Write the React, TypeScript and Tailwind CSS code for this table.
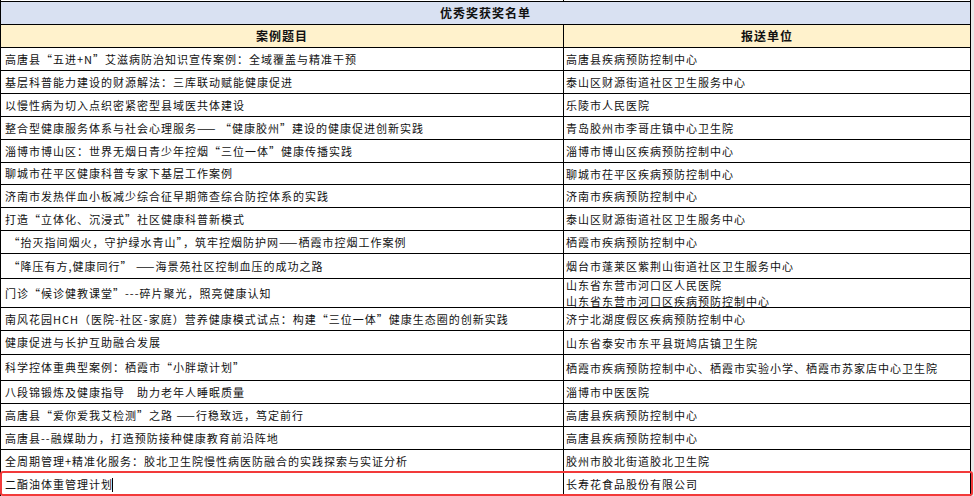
const rows: { title: string; unit: string[]; h: string }[] = [
  { title: "高唐县“五进+N”艾滋病防治知识宣传案例：全域覆盖与精准干预", unit: ["高唐县疾病预防控制中心"], h: "h-[23px]" },
  { title: "基层科普能力建设的财源解法：三库联动赋能健康促进", unit: ["泰山区财源街道社区卫生服务中心"], h: "h-[23px]" },
  { title: "以慢性病为切入点织密紧密型县域医共体建设", unit: ["乐陵市人民医院"], h: "h-[23px]" },
  { title: "整合型健康服务体系与社会心理服务—— “健康胶州”建设的健康促进创新实践", unit: ["青岛胶州市李哥庄镇中心卫生院"], h: "h-[23px]" },
  { title: "淄博市博山区：世界无烟日青少年控烟“三位一体”健康传播实践", unit: ["淄博市博山区疾病预防控制中心"], h: "h-[23px]" },
  { title: "聊城市茌平区健康科普专家下基层工作案例", unit: ["聊城市茌平区疾病预防控制中心"], h: "h-[22px]" },
  { title: "济南市发热伴血小板减少综合征早期筛查综合防控体系的实践", unit: ["济南市疾病预防控制中心"], h: "h-[23px]" },
  { title: "打造“立体化、沉浸式”社区健康科普新模式", unit: ["泰山区财源街道社区卫生服务中心"], h: "h-[23px]" },
  { title: " “抬灭指间烟火，守护绿水青山”，筑牢控烟防护网——栖霞市控烟工作案例", unit: ["栖霞市疾病预防控制中心"], h: "h-[23px]" },
  { title: " “降压有方,健康同行” ——海景苑社区控制血压的成功之路", unit: ["烟台市蓬莱区紫荆山街道社区卫生服务中心"], h: "h-[25px]" },
  { title: "门诊“候诊健教课堂”---碎片聚光，照亮健康认知", unit: ["山东省东营市河口区人民医院", "山东省东营市河口区疾病预防控制中心"], h: "h-[29px]" },
  { title: "南风花园HCH（医院-社区-家庭）营养健康模式试点：构建“三位一体”健康生态圈的创新实践", unit: ["济宁北湖度假区疾病预防控制中心"], h: "h-[23px]" },
  { title: "健康促进与长护互助融合发展", unit: ["山东省泰安市东平县斑鸠店镇卫生院"], h: "h-[24px]" },
  { title: "科学控体重典型案例：栖霞市“小胖墩计划”", unit: ["栖霞市疾病预防控制中心、栖霞市实验小学、栖霞市苏家店中心卫生院"], h: "h-[26px]" },
  { title: "八段锦锻炼及健康指导　助力老年人睡眠质量", unit: ["淄博市中医医院"], h: "h-[23px]" },
  { title: "高唐县“爱你爱我艾检测”之路 ——行稳致远，笃定前行", unit: ["高唐县疾病预防控制中心"], h: "h-[23px]" },
  { title: "高唐县--融媒助力，打造预防接种健康教育前沿阵地", unit: ["高唐县疾病预防控制中心"], h: "h-[23px]" },
  { title: "全周期管理+精准化服务：胶北卫生院慢性病医防融合的实践探索与实证分析", unit: ["胶州市胶北街道胶北卫生院"], h: "h-[23px]" },
];

const font = "font-['Noto_Sans_CJK_SC',sans-serif] text-[11px] tracking-[1px] text-[#111]";

export default function App() {
  return (
    <div className={`flex min-h-screen bg-[#e9e9e9] ${font}`}>
      <div className="w-[971px] bg-white border-l border-black">
        {/* leftover of the row above */}
        <div className="flex h-px">
          <div className="w-[563px] border-r border-black" />
          <div className="flex-1 border-r border-black" />
        </div>

        <div className="flex h-[24px] items-center justify-center border-y border-r border-black bg-[#d9e1f2] text-[12px] font-semibold">
          优秀奖获奖名单
        </div>

        <div className="flex h-[23px] border-b border-black bg-[#fff2cc] text-[12px] font-semibold">
          <div className="flex w-[563px] items-center justify-center border-r border-black">案例题目</div>
          <div className="flex flex-1 items-center justify-center border-r border-black">报送单位</div>
        </div>

        {rows.map((r, i) => (
          <div key={i} className={`flex ${r.h} border-b border-black`}>
            <div className="flex w-[563px] items-center whitespace-pre border-r border-black pl-[4px]">
              {r.title}
            </div>
            <div className="flex flex-1 flex-col justify-center border-r border-black pl-[2px] leading-[16px]">
              {r.unit.map((u) => (
                <div key={u}>{u}</div>
              ))}
            </div>
          </div>
        ))}

        <div className="relative flex h-[23px]">
          <div className="flex w-[563px] items-center border-r border-black pl-[4px]">
            二酯油体重管理计划
            <span className="ml-[-1px] h-[14px] w-px bg-black" />
          </div>
          <div className="flex flex-1 items-center border-r border-black pl-[2px]">长寿花食品股份有限公司</div>
          <div className="pointer-events-none absolute -left-px -right-[2px] -top-[2px] bottom-0 rounded-[3px] border-2 border-[#f23a3a]" />
        </div>
      </div>
    </div>
  );
}
